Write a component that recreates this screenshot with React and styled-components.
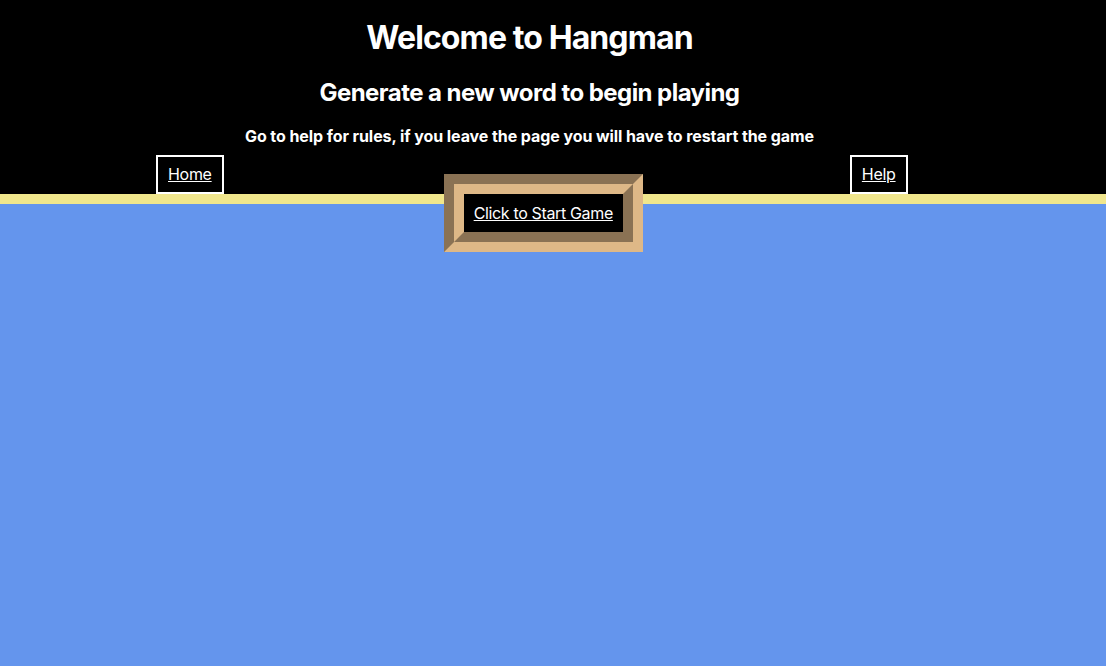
import React from "react"
import styled, { createGlobalStyle } from "styled-components"

const GlobalStyle = createGlobalStyle`
  html, body {
    margin: 0;
    padding: 0;
  }
  body {
    background: #6495ed;
    font-family: Inter, "Noto Sans", sans-serif;
    color: white;
  }
`

const Header = styled.header`
  background: black;
  padding: 18px 47px 9px 0;
  text-align: center;
`

const Title = styled.h1`
  font-size: 32px;
  font-weight: 700;
  letter-spacing: -0.9px;
  margin: 0 0 21px;
`

const Subtitle = styled.h2`
  font-size: 24px;
  font-weight: 700;
  letter-spacing: -0.55px;
  margin: 0 0 19px;
`

const Note = styled.h4`
  font-size: 16px;
  font-weight: 700;
  letter-spacing: -0.08px;
  margin: 0;
`

// black strip for the links, then the khaki rule; the start button hangs over both
const Nav = styled.nav`
  align-items: flex-start;
  background: linear-gradient(
    black 0 39px,
    #f0e68c 39px 49px,
    transparent 49px
  );
  display: flex;
  padding-left: 156px;
`

const NavLink = styled.a`
  border: 2px solid white;
  color: white;
  cursor: pointer;
  font-size: 16px;
  letter-spacing: -0.3px;
  line-height: 19px;
  margin-left: ${props => props.offset || 0}px;
  padding: 8px 10px;
  text-decoration: underline;
`

const StartButton = styled.button`
  background: black;
  border: 20px groove burlywood;
  color: white;
  cursor: pointer;
  font-family: inherit;
  font-size: 16px;
  letter-spacing: -0.35px;
  line-height: 18px;
  margin-left: 220px;
  margin-top: 19px;
  padding: 10px;
  text-decoration: underline;
`

const App = () => {
  return (
    <>
      <GlobalStyle />
      <Header>
        <Title>Welcome to Hangman</Title>
        <Subtitle>Generate a new word to begin playing</Subtitle>
        <Note>
          Go to help for rules, if you leave the page you will have to restart the game
        </Note>
      </Header>
      <Nav>
        <NavLink>Home</NavLink>
        <StartButton>Click to Start Game</StartButton>
        <NavLink offset={207}>Help</NavLink>
      </Nav>
    </>
  )
}

export default App
